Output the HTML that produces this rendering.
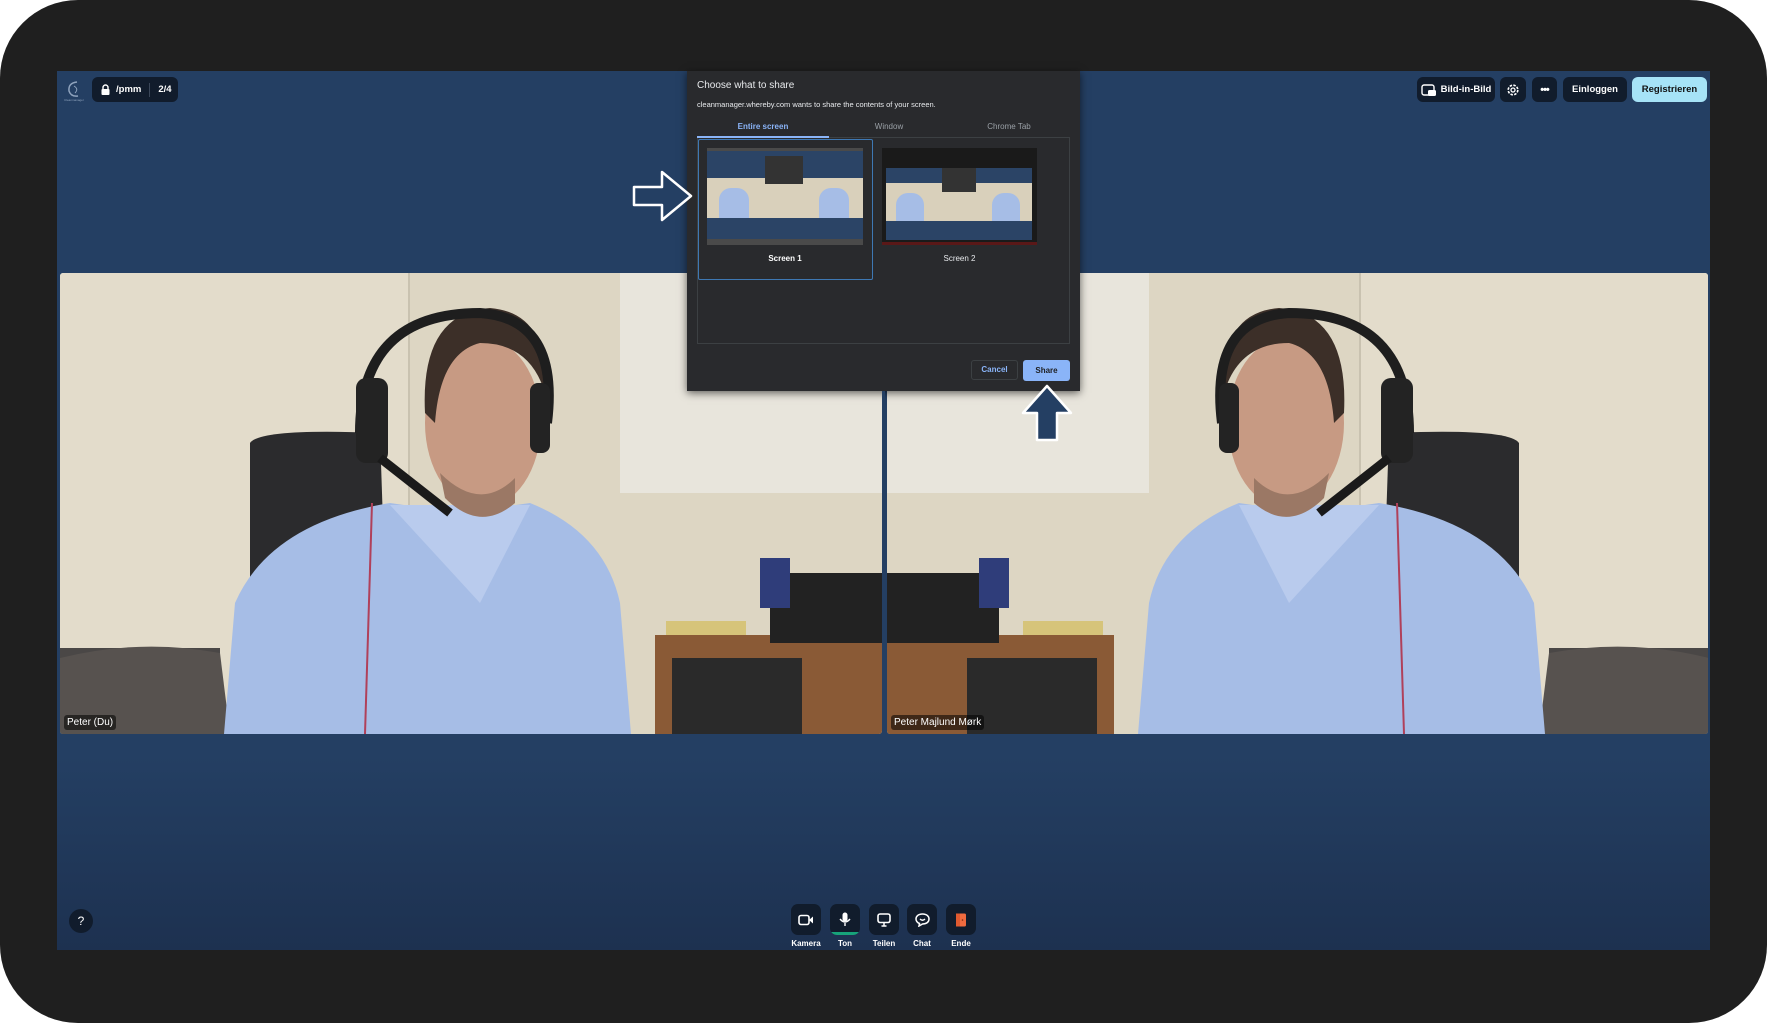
<!DOCTYPE html>
<html><head><meta charset="utf-8"><style>
*{margin:0;padding:0;box-sizing:border-box}
body{width:1767px;height:1023px;background:#fff;overflow:hidden;font-family:"Liberation Sans",sans-serif;position:relative}
.frame{position:absolute;left:0;top:0;width:1767px;height:1023px;background:#1f1f1f;border-radius:78px}
.screen{position:absolute;left:57px;top:71px;width:1653px;height:879px;background:linear-gradient(#243f63 0,#243f63 78%,#1d3150 100%)}
.abs{position:absolute}
.btn{position:absolute;background:#111c2c;border-radius:6px;color:#fff;font-size:9.5px;font-weight:bold;display:flex;align-items:center;justify-content:center}
.vid{position:absolute;top:273px;height:461px;overflow:hidden;border-radius:3px}
.lbl{position:absolute;left:4px;bottom:4px;background:rgba(0,0,0,.55);color:#fff;font-size:10px;padding:2px 3px;border-radius:3px}
.dlg{position:absolute;left:687px;top:71px;width:393px;height:320px;background:#292a2d;box-shadow:0 2px 8px rgba(0,0,0,.6)}
.tb{position:absolute;width:30px;height:31px;top:904px;background:#111c2c;border-radius:7px;display:flex;align-items:center;justify-content:center}
.tl{position:absolute;top:939px;width:40px;text-align:center;color:#fff;font-size:8px;font-weight:bold}
</style></head><body>
<div class="frame"></div>
<div class="screen"></div>

<svg width="0" height="0" style="position:absolute"><defs>
<g id="scene">
<rect width="822" height="461" fill="#ddd6c3"/>
<rect x="0" y="0" width="350" height="461" fill="#e3dccb"/>
<line x1="349" y1="0" x2="349" y2="250" stroke="#c9c2b0" stroke-width="2"/>
<rect x="560" y="0" width="262" height="220" fill="#e8e5dc"/>
<rect x="0" y="375" width="160" height="86" fill="#4a4746"/>
<path d="M0 385 Q80 365 160 380 L170 461 L0 461Z" fill="#57524f"/>
<path d="M190 170 Q200 155 320 160 L330 460 L190 460Z" fill="#2b2b2d"/>
<rect x="595" y="362" width="227" height="99" fill="#8a5a36"/>
<rect x="612" y="385" width="130" height="76" fill="#2a2a2a"/>
<rect x="710" y="300" width="112" height="70" fill="#222"/>
<rect x="700" y="285" width="30" height="50" fill="#2f3d7a"/>
<rect x="606" y="348" width="80" height="14" fill="#d6c47a"/>
<path d="M164 461 L175 330 Q210 250 330 230 L400 240 L470 230 Q545 260 560 330 L571 461Z" fill="#a6bde6"/>
<path d="M330 232 L420 330 L470 232" fill="#b9cbed"/>
<line x1="312" y1="230" x2="305" y2="461" stroke="#b0405a" stroke-width="2"/>
<ellipse cx="423" cy="150" rx="58" ry="85" fill="#c79a83"/>
<path d="M365 140 Q360 40 430 35 Q490 40 485 120 Q470 70 420 70 Q380 80 375 150Z" fill="#3c2f28"/>
<path d="M300 160 Q300 40 420 40 Q500 45 487 150" stroke="#1e1e1e" stroke-width="10" fill="none"/>
<rect x="296" y="105" width="32" height="85" rx="10" fill="#232323"/>
<rect x="470" y="110" width="20" height="70" rx="8" fill="#232323"/>
<line x1="320" y1="185" x2="390" y2="240" stroke="#1a1a1a" stroke-width="9"/>
<path d="M380 200 Q420 240 455 205 L455 230 Q420 260 385 225Z" fill="#9b7865"/>
</g></defs></svg>

<div class="vid" style="left:60px;width:822px"><svg width="822" height="461"><use href="#scene"/></svg><div class="lbl">Peter (Du)</div></div>
<div class="vid" style="left:887px;width:821px"><svg width="822" height="461"><g transform="translate(822,0) scale(-1,1)"><use href="#scene"/></g></svg><div class="lbl">Peter Majlund Mørk</div></div>

<svg class="abs" style="left:64px;top:80px" width="20" height="22" viewBox="0 0 20 22"><path d="M13 2 Q4 3 5 11 Q7 17 14 16" stroke="#8fa3bd" stroke-width="1.5" fill="none"/><path d="M10 6 Q15 9 11 13" stroke="#8fa3bd" stroke-width="1" fill="none"/><text x="10" y="21" font-size="3" fill="#8fa3bd" text-anchor="middle">Cleanmanager</text></svg>
<div class="btn" style="left:92px;top:77px;width:86px;height:25px;justify-content:flex-start;padding-left:9px">
<svg width="9" height="11" viewBox="0 0 9 11"><path d="M2 5V3.5a2.5 2.5 0 015 0V5" stroke="#fff" stroke-width="1.4" fill="none"/><rect x="0.5" y="5" width="8" height="6" rx="1" fill="#fff"/></svg>
<span style="margin-left:6px">/pmm</span><span style="margin:0 8px;width:1px;height:14px;background:#3a4658"></span><span>2/4</span></div>

<div class="btn" style="left:1417px;top:77px;width:78px;height:25px"><svg width="15" height="12" viewBox="0 0 15 12" style="margin-right:5px"><rect x="1" y="1" width="12" height="10" rx="2" stroke="#fff" stroke-width="1.4" fill="none"/><rect x="7" y="6" width="8" height="6" rx="1.5" fill="#fff"/></svg>Bild-in-Bild</div>
<div class="btn" style="left:1500px;top:77px;width:26px;height:25px"><svg width="14" height="14" viewBox="0 0 14 14"><circle cx="7" cy="7" r="4.8" stroke="#fff" stroke-width="1.6" fill="none" stroke-dasharray="2.5 1.3"/><circle cx="7" cy="7" r="2" stroke="#fff" stroke-width="1.3" fill="none"/></svg></div>
<div class="btn" style="left:1532px;top:77px;width:25px;height:25px;font-size:11px;letter-spacing:-1px">•••</div>
<div class="btn" style="left:1563px;top:77px;width:64px;height:25px">Einloggen</div>
<div class="btn" style="left:1632px;top:77px;width:75px;height:25px;background:#a6e3f7;color:#111">Registrieren</div>

<div class="dlg">
<div class="abs" style="left:10px;top:9px;color:#e8eaed;font-size:10px">Choose what to share</div>
<div class="abs" style="left:10px;top:29px;color:#e8eaed;font-size:7.5px">cleanmanager.whereby.com wants to share the contents of your screen.</div>
<div class="abs" style="left:10px;top:51px;width:132px;text-align:center;color:#8ab4f8;font-size:8px;font-weight:bold">Entire screen</div>
<div class="abs" style="left:142px;top:51px;width:120px;text-align:center;color:#9aa0a6;font-size:8px">Window</div>
<div class="abs" style="left:262px;top:51px;width:120px;text-align:center;color:#9aa0a6;font-size:8px">Chrome Tab</div>
<div class="abs" style="left:10px;top:66px;width:373px;height:207px;border:1px solid #3c4043"></div>
<div class="abs" style="left:10px;top:65px;width:132px;height:2px;background:#8ab4f8"></div>
<div class="abs" style="left:11px;top:68px;width:175px;height:141px;border:1px solid #3e78b3;border-radius:2px"></div>
<div class="abs" style="left:20px;top:77px;width:156px;height:97px;background:#4a4a4a">
 <div class="abs" style="left:0;top:3px;width:156px;height:88px;background:#2b4466"></div>
 <div class="abs" style="left:0;top:30px;width:156px;height:40px;background:#d9d0bb"></div>
 <div class="abs" style="left:12px;top:40px;width:30px;height:30px;background:#a6bde6;border-radius:12px 12px 0 0"></div>
 <div class="abs" style="left:112px;top:40px;width:30px;height:30px;background:#a6bde6;border-radius:12px 12px 0 0"></div>
 <div class="abs" style="left:58px;top:8px;width:38px;height:28px;background:#333"></div>
</div>
<div class="abs" style="left:20px;top:183px;width:156px;text-align:center;color:#fff;font-size:8px;font-weight:bold">Screen 1</div>
<div class="abs" style="left:195px;top:77px;width:155px;height:97px;background:#1a1a1a;border-bottom:3px solid #5a1818">
 <div class="abs" style="left:4px;top:20px;width:146px;height:72px;background:#2b4466"></div>
 <div class="abs" style="left:4px;top:35px;width:146px;height:38px;background:#d9d0bb"></div>
 <div class="abs" style="left:14px;top:45px;width:28px;height:28px;background:#a6bde6;border-radius:12px 12px 0 0"></div>
 <div class="abs" style="left:110px;top:45px;width:28px;height:28px;background:#a6bde6;border-radius:12px 12px 0 0"></div>
 <div class="abs" style="left:60px;top:20px;width:34px;height:24px;background:#333"></div>
</div>
<div class="abs" style="left:195px;top:183px;width:155px;text-align:center;color:#e8eaed;font-size:8px">Screen 2</div>
<div class="abs" style="left:284px;top:289px;width:47px;height:20px;border:1px solid #3c4043;border-radius:3px;color:#8ab4f8;font-size:8px;font-weight:bold;text-align:center;line-height:18px">Cancel</div>
<div class="abs" style="left:336px;top:289px;width:47px;height:21px;background:#8ab4f8;border-radius:3px;color:#202124;font-size:8px;font-weight:bold;text-align:center;line-height:21px">Share</div>
</div>
<div class="abs" style="left:882px;top:391px;width:3px;height:343px;background:#243f63"></div>

<svg class="abs" style="left:632px;top:169px" width="62" height="54" viewBox="0 0 62 54"><path d="M2 18 H30 V3 L59 27 L30 51 V36 H2Z" fill="#243f63" stroke="#fff" stroke-width="2.5" stroke-linejoin="round"/></svg>
<svg class="abs" style="left:1020px;top:383px" width="54" height="60" viewBox="0 0 54 60"><path d="M17 57 V30 H3 L27 3 L51 30 H37 V57Z" fill="#243f63" stroke="#fff" stroke-width="2.5" stroke-linejoin="round"/></svg>

<div class="abs" style="left:69px;top:909px;width:24px;height:24px;border-radius:50%;background:#111c2c;color:#fff;font-size:12px;text-align:center;line-height:24px">?</div>

<div class="tb" style="left:791px"><svg width="16" height="12" viewBox="0 0 16 12"><rect x="1" y="1.5" width="10" height="9" rx="2" stroke="#fff" stroke-width="1.6" fill="none"/><path d="M11 6 L15 2.5 V9.5Z" fill="#fff"/></svg></div>
<div class="tb" style="left:830px;overflow:hidden"><svg width="12" height="15" viewBox="0 0 12 15"><rect x="3.5" y="0.5" width="5" height="9" rx="2.5" fill="#fff"/><path d="M1 7 Q6 13 11 7 M6 11 V14" stroke="#fff" stroke-width="1.4" fill="none"/></svg><div class="abs" style="left:0;bottom:0;width:30px;height:3px;background:#17a37a"></div></div>
<div class="tb" style="left:869px"><svg width="14" height="14" viewBox="0 0 14 14"><rect x="1" y="1" width="12" height="8.5" rx="2" stroke="#fff" stroke-width="1.6" fill="none"/><path d="M7 10 V13 M4.5 13 H9.5" stroke="#fff" stroke-width="1.5"/></svg></div>
<div class="tb" style="left:907px"><svg width="15" height="14" viewBox="0 0 15 14"><path d="M7.5 1 C12 1 14 3.5 14 6 C14 9 11.5 11 7.5 11 L4 13 L4.5 10.5 C2 9.5 1 8 1 6 C1 3.5 3 1 7.5 1Z" stroke="#fff" stroke-width="1.5" fill="none"/><path d="M5 6 Q7.5 8.5 10 6" stroke="#fff" stroke-width="1.3" fill="none"/></svg></div>
<div class="tb" style="left:946px"><svg width="12" height="14" viewBox="0 0 12 14"><rect x="1" y="0.5" width="10" height="13" rx="1.5" fill="#f06b3f"/><rect x="1" y="0.5" width="4" height="13" fill="#e05a30"/><circle cx="7.5" cy="7" r="0.8" fill="#7a2a10"/></svg></div>
<div class="tl" style="left:786px">Kamera</div>
<div class="tl" style="left:825px">Ton</div>
<div class="tl" style="left:864px">Teilen</div>
<div class="tl" style="left:902px">Chat</div>
<div class="tl" style="left:941px">Ende</div>
</body></html>
